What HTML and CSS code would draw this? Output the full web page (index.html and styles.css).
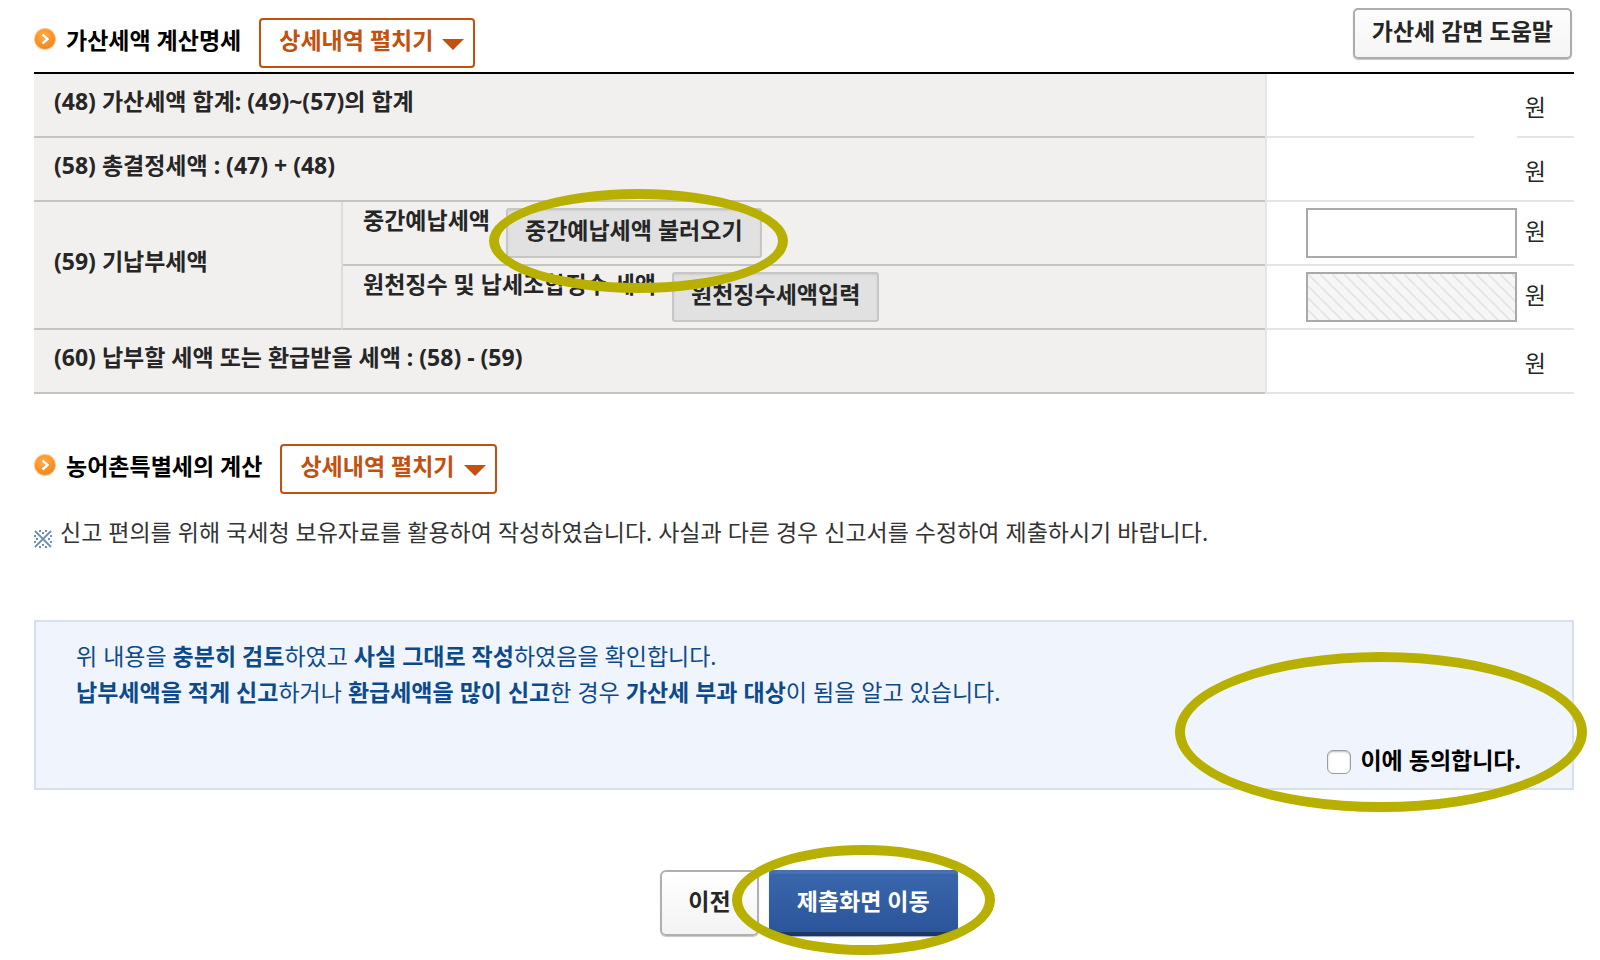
FILE: index.html
```
<!DOCTYPE html>
<html lang="ko">
<head>
<meta charset="utf-8">
<title>가산세액 계산명세</title>
<link rel="stylesheet" href="styles.css">
</head>
<body>
<svg class="defs" aria-hidden="true">
  <defs>
    <radialGradient id="orb" cx="45%" cy="35%" r="65%">
      <stop offset="0" stop-color="#ffb347"/>
      <stop offset="0.65" stop-color="#fb9226"/>
      <stop offset="1" stop-color="#ee8420"/>
    </radialGradient>
    <symbol id="bullet" viewBox="0 0 22 22">
      <circle cx="11" cy="11" r="11" fill="#f9c48c"/>
      <circle cx="11" cy="11" r="10" fill="url(#orb)"/>
      <path d="M8.5 6.5 L13.5 11 L8.5 15.5" fill="none" stroke="#c96a10" stroke-opacity=".5" stroke-width="3.6"/>
      <path d="M8.5 6.5 L13.5 11 L8.5 15.5" fill="none" stroke="#fff" stroke-width="2.6"/>
    </symbol>
  </defs>
</svg>
<main class="page">
  <header class="section-head">
    <div class="title-group">
      <svg class="bullet" aria-hidden="true"><use href="#bullet"/></svg>
      <h2 class="title">가산세액 계산명세</h2>
      <button type="button" class="btn btn-toggle">상세내역 펼치기<span class="caret"></span></button>
    </div>
    <button type="button" class="btn btn-help">가산세 감면 도움말</button>
  </header>

  <table class="tax-table">
    <colgroup><col class="col-group"><col><col class="col-amount"></colgroup>
    <tbody>
      <tr>
        <th colspan="2" scope="row">(48) 가산세액 합계: (49)~(57)의 합계</th>
        <td class="amount amount-gap">원</td>
      </tr>
      <tr>
        <th colspan="2" scope="row">(58) 총결정세액 : (47) + (48)</th>
        <td class="amount">원</td>
      </tr>
      <tr>
        <th rowspan="2" scope="rowgroup" class="group">(59) 기납부세액</th>
        <th scope="row" class="sub">
          <div class="sub-row">
            <label for="prepaid">중간예납세액</label>
            <span class="marked"><button type="button" class="btn btn-grey">중간예납세액 불러오기</button><span class="ring ring-load"></span></span>
          </div>
        </th>
        <td class="field"><div class="field-row"><input id="prepaid" type="text" class="money"><span class="unit">원</span></div></td>
      </tr>
      <tr>
        <th scope="row" class="sub">
          <div class="sub-row">
            <label for="withheld">원천징수 및 납세조합징수 세액</label>
            <button type="button" class="btn btn-grey">원천징수세액입력</button>
          </div>
        </th>
        <td class="field"><div class="field-row"><input id="withheld" type="text" class="money" disabled><span class="unit">원</span></div></td>
      </tr>
      <tr>
        <th colspan="2" scope="row">(60) 납부할 세액 또는 환급받을 세액 : (58) - (59)</th>
        <td class="amount">원</td>
      </tr>
    </tbody>
  </table>

  <div class="title-group title-rural">
    <svg class="bullet" aria-hidden="true"><use href="#bullet"/></svg>
    <h2 class="title">농어촌특별세의 계산</h2>
    <button type="button" class="btn btn-toggle">상세내역 펼치기<span class="caret"></span></button>
  </div>

  <p class="note">
    <svg class="note-mark" viewBox="0 0 18 18" aria-hidden="true">
      <path d="M1 1 L17 17 M17 1 L1 17" stroke="#6f8fb8" stroke-width="1.8"/>
      <path d="M5 0h2v2h-2z M11 0h2v2h-2z M8 2h2v2h-2z M5 16h2v2h-2z M11 16h2v2h-2z M8 14h2v2h-2z M0 5h2v2h-2z M0 11h2v2h-2z M2 8h2v2h-2z M16 5h2v2h-2z M16 11h2v2h-2z M14 8h2v2h-2z" fill="#6f8fb8"/>
    </svg>
    <span>신고 편의를 위해 국세청 보유자료를 활용하여 작성하였습니다. 사실과 다른 경우 신고서를 수정하여 제출하시기 바랍니다.</span>
  </p>

  <section class="agree">
    <p class="agree-text">위 내용을 <b>충분히 검토</b>하였고 <b>사실 그대로 작성</b>하였음을 확인합니다.<br><b>납부세액을 적게 신고</b>하거나 <b>환급세액을 많이 신고</b>한 경우 <b>가산세 부과 대상</b>이 됨을 알고 있습니다.</p>
    <div class="agree-check">
      <input id="agree" type="checkbox" class="check">
      <label for="agree">이에 동의합니다.</label>
    </div>
    <span class="ring ring-agree"></span>
  </section>

  <div class="actions">
    <button type="button" class="btn btn-prev">이전</button>
    <span class="marked"><button type="button" class="btn btn-submit">제출화면 이동</button><span class="ring ring-submit"></span></span>
  </div>
</main>
</body>
</html>
```
FILE: styles.css
```
* { box-sizing: border-box; }
body {
  margin: 0;
  background: #fff;
  color: #262626;
  font-family: "Noto Sans", "Noto Sans CJK KR", sans-serif;
  font-size: 23px;
  line-height: 36px;
}
.defs { position: absolute; width: 0; height: 0; }
.page { padding: 8px 26px 24px 34px; }

.btn {
  margin: 0;
  height: 50px;
  padding: 0 17px 6px;
  font: inherit;
  font-weight: 700;
  line-height: 40px;
  color: #262626;
  white-space: nowrap;
}

/* Section headings */
.section-head { display: flex; justify-content: space-between; align-items: flex-start; height: 64px; }
.section-head .title-group { margin-top: 10px; }
.title-group { display: flex; align-items: flex-start; }
.bullet { width: 22px; height: 22px; margin: 10px 10px 0 0; }
.title { margin: 0 18px 0 0; font-size: 23px; font-weight: 700; line-height: 44px; color: #000; white-space: nowrap; }
.title-rural { margin-top: 50px; }
.btn-toggle {
  display: flex;
  align-items: center;
  gap: 9px;
  padding: 0 9px 6px 18px;
  border: 2px solid #c2500f;
  border-radius: 4px;
  background: #fff;
  color: #c2500f;
}
.caret { margin-top: 8px; border: 11px solid transparent; border-top-color: #c2500f; border-bottom-width: 0; }
.btn-help {
  height: 51px;
  margin-right: 2px;
  border: 2px solid #acacac;
  border-radius: 5px;
  background: linear-gradient(#fdfdfd, #f5f5f5);
  box-shadow: 0 1px 1px #c4c4c4;
}

/* Tax table */
.tax-table { width: 100%; border-collapse: separate; border-spacing: 0; border-top: 2px solid #000; table-layout: fixed; }
.col-group { width: 309px; }
.col-amount { width: 309px; }
th {
  height: 64px;
  padding: 0 20px 8px;
  border-bottom: 2px solid #c4c4c4;
  background: #f1f0ee;
  font-weight: 700;
  text-align: left;
}
th.group { border-right: 2px solid #dcdcdc; }
th.sub { padding: 0 20px; vertical-align: top; }
.sub-row { display: flex; align-items: flex-start; gap: 16px; }
.sub-row .btn { margin-top: 6px; }
.marked { position: relative; display: block; }
.marked .btn { display: block; }
.btn-grey { border: 2px solid #c6c6c6; border-radius: 3px; background: #e1e1e1; box-shadow: inset 0 1px 2px #d0d0d0; }
td { position: relative; padding: 0 28px 0 0; border-left: 2px solid #e5e5e5; border-bottom: 2px solid #e5e5e5; text-align: right; }
td.amount { padding-top: 4px; }
.amount-gap::after { content: ""; position: absolute; right: 57px; bottom: -2px; width: 43px; height: 2px; background: #fff; }
.field-row { display: flex; justify-content: flex-end; align-items: center; gap: 8px; }
.unit { padding-bottom: 4px; }
.money {
  width: 211px;
  height: 50px;
  padding: 0 8px;
  border: 2px solid #a9a9a9;
  background: #fff;
  font: inherit;
  text-align: right;
}
.money:disabled {
  background: linear-gradient(45deg, #f6f6f6 42%, #e2e2e2 48%, #e2e2e2 52%, #f6f6f6 58%) 0 0 / 12px 12px;
}

/* Note */
.note { display: flex; gap: 8px; margin: 20px 0 0; color: #333; }
.note-mark { flex: none; width: 18px; height: 18px; margin-top: 16px; }

/* Confirmation */
.agree {
  position: relative;
  height: 170px;
  margin-top: 70px;
  padding: 16px 51px 8px 40px;
  border: 2px solid #d8e1eb;
  background: #f0f5fd;
  color: #0d4a8b;
}
.agree-text { margin: 0; }
.agree-check { display: flex; justify-content: flex-end; gap: 9px; margin-top: 32px; color: #000; font-weight: 700; }
.check {
  appearance: none;
  width: 24px;
  height: 24px;
  margin: 8px 0 0;
  border: 1px solid #9c9c9c;
  border-radius: 6px;
  background: #fff;
  box-shadow: inset 0 1px 2px #bbb;
}

/* Bottom buttons */
.actions { display: flex; justify-content: center; gap: 10px; margin-top: 80px; padding-left: 10px; }
.actions .btn { height: 66px; padding: 0 26px 4px; line-height: 56px; }
.btn-prev { border: 2px solid #b0b0b0; border-radius: 6px; background: linear-gradient(#fff, #f3f3f3); box-shadow: 0 1px 1px #c8c8c8; }
.actions .btn-submit {
  padding: 0 28px 4px;
  border: 0;
  border-radius: 4px;
  background: linear-gradient(#3a67ad, #2b5499);
  box-shadow: inset 0 4px 0 #4670b2, inset 0 -4px 0 #1d3864, 0 1px 1px #9aa7bd;
  color: #fff;
}

/* Highlight rings */
.ring { position: absolute; border: 10px solid #b8b000; border-radius: 50%; pointer-events: none; z-index: 1; }
.ring-load { inset: -13px -26px -35px -17px; }
.ring-agree { right: -15px; bottom: -24px; width: 412px; height: 160px; }
.ring-submit { inset: -25px -37px -19px; }
```
